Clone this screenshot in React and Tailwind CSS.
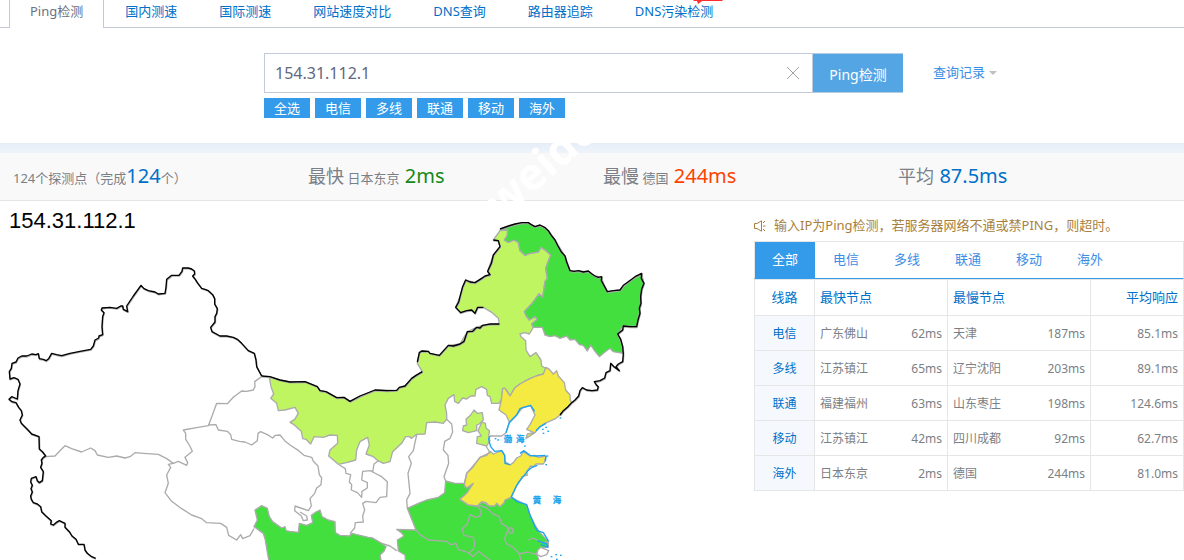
import { useState } from 'react'

const TABS = ['Ping检测', '国内测速', '国际测速', '网站速度对比', 'DNS查询', '路由器追踪', 'DNS污染检测']
const CHIPS = ['全选', '电信', '多线', '联通', '移动', '海外']
const LINES = ['全部', '电信', '多线', '联通', '移动', '海外']

const ROWS = [
  { line: '电信', fast: '广东佛山', fastMs: '62ms', slow: '天津', slowMs: '187ms', avg: '85.1ms' },
  { line: '多线', fast: '江苏镇江', fastMs: '65ms', slow: '辽宁沈阳', slowMs: '203ms', avg: '89.1ms' },
  { line: '联通', fast: '福建福州', fastMs: '63ms', slow: '山东枣庄', slowMs: '198ms', avg: '124.6ms' },
  { line: '移动', fast: '江苏镇江', fastMs: '42ms', slow: '四川成都', slowMs: '92ms', avg: '62.7ms' },
  { line: '海外', fast: '日本东京', fastMs: '2ms', slow: '德国', slowMs: '244ms', avg: '81.0ms' },
]

// Map geometry, three units per pixel
const BORDER_WEST =
  '287,1675 275,1670 262,1660 255,1650 252,1633 235,1633 228,1618 216,1608 208,1595 195,1582 195,1570 178,1562 168,1568 160,1575 152,1572 154,1562 138,1548 125,1535 122,1520 112,1512 100,1508 94,1498 92,1488 97,1476 93,1466 97,1456 92,1446 94,1435 108,1430 112,1442 118,1448 127,1442 130,1415 122,1402 126,1390 124,1380 130,1372 137,1368 128,1356 118,1347 117,1310 95,1302 84,1290 72,1278 64,1270 60,1260 67,1245 64,1232 56,1222 48,1208 36,1205 27,1198 35,1190 52,1197 54,1172 60,1152 54,1138 42,1133 30,1137 28,1115 34,1105 36,1090 48,1086 54,1074 65,1068 80,1068 95,1062 108,1064 115,1061 118,1076 130,1078 138,1082 146,1076 155,1060 170,1064 185,1067 210,1060 240,1054 272,1048 280,1038 285,1020 296,1014 297,1008 308,1004 306,980 308,950 312,938 304,930 306,924 330,922 350,925 362,918 368,918 370,928 383,935 380,918 400,888 423,856 432,866 445,872 465,876 475,882 495,880 498,862 500,838 515,826 537,826 546,814 548,804 565,804 575,807 583,813 584,822 578,828 586,838 592,848 605,865 615,868 625,872 638,884 644,896 644,912 652,926 650,940 645,950 645,966 632,982 636,995 660,1008 680,1008 700,1012 712,1018 725,1030 745,1052 763,1060 768,1080 770,1100 785,1128'
const BORDER_NORTH =
  '785,1128 810,1130 840,1140 870,1146 915,1145 952,1160 960,1172 978,1175 1010,1193 1032,1192 1050,1204 1080,1188 1125,1170 1160,1172 1190,1171 1198,1162 1215,1158 1235,1135 1248,1126 1267,1115'
const BORDER_NOTCH =
  '1252,1086 1258,1058 1265,1053 1285,1054 1290,1060 1318,1066 1345,1036 1360,1038 1380,1032 1392,1024 1402,995 1418,994 1430,982 1440,984 1448,976 1470,972 1498,972'
const BORDER_NE_WEST =
  '1450,922 1433,922 1425,940 1415,930 1400,932 1382,938 1367,922 1376,906 1380,890 1388,860 1397,840 1410,846 1425,848 1445,835 1455,828 1470,824 1463,814 1474,790 1480,765 1488,755 1500,740 1495,722 1480,720'
const BORDER_EAST =
  '1500,687 1525,678 1545,672 1565,668 1585,668 1594,674 1605,680 1620,675 1634,682 1645,692 1654,706 1665,720 1674,738 1684,756 1695,768 1700,786 1710,812 1722,814 1735,812 1750,816 1765,813 1776,822 1785,828 1795,832 1805,830 1804,842 1812,856 1822,875 1840,872 1860,870 1870,856 1885,845 1905,830 1925,820 1924,835 1932,850 1925,868 1922,890 1923,910 1918,925 1920,940 1914,960 1910,980 1890,980 1870,978 1868,990 1853,1002 1862,1018 1868,1040 1870,1062 1868,1085 1855,1092 1848,1100 1858,1112 1842,1100 1832,1090 1830,1112 1818,1118 1814,1134 1800,1142 1783,1145 1790,1156 1795,1160 1792,1170 1776,1172 1760,1170 1747,1163 1740,1172 1736,1188 1725,1200 1715,1208 1704,1220 1690,1232 1680,1245'

const INNER_MONGOLIA =
  '808,1132 840,1140 870,1146 915,1145 952,1160 960,1172 978,1175 1010,1193 1032,1192 1050,1204 1080,1188 1125,1170 1190,1171 1198,1162 1215,1158 1235,1135 1267,1115 1252,1090 1258,1058 1265,1053 1285,1054 1290,1060 1318,1066 1345,1036 1380,1032 1402,995 1430,982 1448,976 1498,972 1495,955 1475,937 1450,922 1433,922 1425,940 1415,930 1382,938 1367,922 1380,890 1388,860 1397,840 1425,848 1445,835 1470,824 1463,814 1480,765 1500,740 1495,722 1480,720 1500,692 1523,690 1522,706 1513,720 1525,727 1542,720 1555,727 1560,752 1575,766 1590,760 1615,756 1623,742 1638,752 1652,765 1637,805 1642,835 1635,845 1628,892 1617,882 1598,908 1573,935 1580,950 1588,960 1605,950 1612,958 1595,972 1600,982 1588,1002 1574,998 1560,1002 1563,1010 1577,1022 1578,1050 1590,1070 1608,1058 1623,1080 1625,1098 1638,1105 1630,1122 1608,1128 1585,1138 1560,1152 1544,1164 1530,1188 1522,1175 1515,1165 1508,1165 1504,1200 1497,1210 1475,1210 1470,1190 1462,1186 1460,1168 1445,1160 1428,1168 1425,1188 1412,1188 1400,1197 1388,1194 1375,1210 1364,1204 1362,1184 1345,1195 1335,1215 1340,1240 1340,1258 1330,1270 1306,1266 1280,1268 1275,1302 1250,1303 1235,1315 1228,1310 1217,1310 1205,1330 1178,1355 1170,1385 1150,1390 1134,1382 1120,1370 1098,1362 1108,1335 1103,1312 1080,1325 1070,1350 1067,1380 1040,1388 1015,1393 986,1368 990,1350 1013,1330 1012,1306 990,1305 970,1312 942,1310 932,1332 918,1318 908,1316 904,1294 882,1274 870,1267 884,1258 895,1240 885,1222 855,1230 835,1232 830,1210 812,1195 821,1182 813,1160'
const HEILONGJIANG =
  '1500,690 1525,680 1565,670 1585,670 1605,680 1620,677 1645,692 1665,720 1695,768 1710,812 1765,815 1785,828 1805,832 1812,856 1822,875 1860,870 1885,845 1925,822 1932,850 1925,868 1922,920 1910,980 1870,978 1853,1002 1866,1035 1868,1060 1840,1055 1830,1045 1812,1058 1798,1070 1782,1050 1772,1035 1762,1053 1750,1036 1738,1034 1725,1018 1710,1020 1700,1008 1680,1015 1665,1007 1650,1010 1635,1005 1627,982 1600,982 1595,972 1612,958 1605,950 1588,960 1580,950 1573,935 1598,908 1617,882 1628,892 1635,845 1642,835 1637,805 1652,765 1638,752 1623,742 1615,756 1590,760 1575,766 1560,752 1555,727 1542,720 1525,727 1513,720 1522,706 1523,690'
const LIAONING =
  '1638,1102 1648,1108 1660,1122 1670,1112 1675,1128 1693,1148 1697,1170 1710,1185 1711,1200 1715,1208 1680,1245 1668,1255 1635,1270 1616,1284 1605,1298 1578,1315 1582,1302 1602,1298 1580,1288 1590,1274 1605,1245 1592,1217 1568,1222 1550,1245 1528,1266 1518,1245 1497,1230 1504,1200 1508,1165 1515,1165 1530,1188 1544,1164 1560,1152 1585,1138 1608,1128 1630,1122'
const BEIJING =
  '1422,1230 1432,1240 1447,1238 1450,1260 1438,1272 1430,1275 1430,1292 1405,1298 1388,1292 1390,1278 1400,1275 1398,1258 1412,1245'
const TIANJIN = '1446,1266 1456,1270 1458,1284 1468,1292 1466,1312 1470,1322 1460,1338 1430,1330 1432,1310 1444,1308 1434,1292'
const SHANDONG =
  '1440,1372 1460,1366 1470,1354 1480,1362 1505,1352 1514,1366 1515,1385 1530,1395 1540,1388 1550,1374 1562,1368 1570,1355 1590,1368 1605,1366 1615,1372 1638,1368 1634,1386 1630,1392 1608,1392 1600,1400 1592,1398 1580,1415 1582,1425 1566,1430 1560,1442 1555,1446 1545,1468 1533,1492 1515,1500 1512,1508 1500,1520 1490,1510 1484,1518 1468,1518 1458,1508 1445,1505 1432,1518 1405,1515 1380,1498 1400,1480 1420,1450 1400,1464 1393,1455 1400,1420 1420,1400 1430,1385'
const EAST_GREEN =
  '1337,1443 1365,1450 1393,1450 1396,1462 1420,1450 1400,1480 1380,1498 1405,1515 1432,1518 1445,1505 1468,1518 1490,1510 1500,1520 1515,1500 1533,1492 1580,1515 1590,1545 1605,1575 1615,1592 1645,1625 1645,1640 1615,1648 1610,1662 1620,1690 1217,1690 1215,1665 1195,1653 1192,1620 1212,1608 1204,1598 1190,1588 1248,1590 1236,1560 1222,1525 1260,1508 1280,1500 1315,1492 1334,1478'
const SICHUAN =
  '808,1690 800,1645 796,1620 790,1600 762,1580 772,1560 765,1530 785,1517 802,1525 808,1550 818,1565 845,1584 855,1580 858,1592 870,1594 895,1597 898,1570 920,1576 938,1568 934,1546 948,1536 960,1530 966,1550 985,1560 1005,1565 1006,1598 1020,1606 1048,1608 1055,1600 1105,1612 1118,1614 1145,1630 1158,1640 1152,1654 1140,1665 1145,1690'

const PROVINCE_LINES = [
  '137,1370 165,1368 182,1350 195,1337 215,1346 245,1356 272,1344 285,1352 292,1365 325,1372 350,1368 375,1374 390,1370 405,1358 430,1360 475,1363 500,1376 520,1390 535,1384 560,1396 563,1388 555,1372 577,1354 568,1335 557,1318 557,1300 550,1290 590,1283 625,1277 637,1246 650,1210 682,1211 700,1192 725,1173 740,1174 760,1170 765,1160 764,1145 785,1130',
  '625,1275 648,1274 655,1290 682,1294 692,1304 695,1318 718,1324 735,1326 755,1335 772,1322 774,1300 782,1295 802,1304 818,1314 826,1306 840,1305 854,1322 870,1335 896,1352 912,1366 935,1372 940,1384 954,1398 958,1424 965,1434 963,1454 950,1464 944,1480 930,1496 934,1518 925,1532 902,1524 885,1518 884,1532 904,1548 910,1562 922,1560 920,1548 900,1536',
  '520,1390 505,1393 512,1402 500,1425 505,1450 495,1478 515,1504 545,1526 575,1545 605,1556 620,1568 662,1570 680,1582 686,1606 710,1620 722,1604 728,1616 750,1607 762,1586',
  '1018,1395 1036,1406 1038,1420 1052,1424 1048,1446 1055,1454 1054,1470 1072,1478 1085,1492 1086,1474 1102,1464 1102,1448 1085,1440 1088,1414 1112,1412 1118,1416 1122,1392 1135,1382',
  '1118,1416 1145,1430 1162,1445 1160,1490 1140,1492 1128,1508 1098,1504 1088,1510 1094,1530 1088,1548 1090,1566 1066,1568 1064,1584 1050,1600',
  '1250,1305 1244,1332 1240,1352 1226,1370 1234,1390 1224,1420 1230,1480 1220,1500 1222,1525',
  '1340,1258 1355,1272 1358,1296 1350,1315 1334,1324 1330,1350 1344,1366 1346,1390 1332,1430 1337,1443',
  '1393,1450 1400,1420 1430,1385 1440,1372 1470,1358 1458,1338',
  '1470,1308 1505,1308 1518,1298 1528,1266',
  '1432,1518 1444,1534 1440,1548 1428,1552 1410,1544 1402,1572 1386,1586 1392,1606 1420,1612 1424,1632 1420,1648 1406,1660 1420,1670 1435,1654 1470,1680',
  '1435,1515 1460,1524 1476,1540 1498,1550 1504,1570 1520,1580 1530,1600 1540,1598 1536,1584 1526,1584 1514,1615 1518,1630 1542,1644 1558,1662 1584,1656 1600,1662 1612,1660',
  '1248,1590 1260,1604 1285,1620 1340,1624 1352,1634 1368,1630 1374,1648 1406,1658',
  '1558,1662 1562,1680',
  '1145,1630 1170,1638 1190,1652',
  '1585,1620 1600,1614 1625,1628 1642,1626',
]

const COAST = [
  '1518,1298 1528,1268 1550,1245 1560,1226 1592,1216 1604,1234',
  '1638,1270 1620,1280 1608,1292',
  '1470,1308 1466,1318 1472,1340 1484,1354 1505,1352 1514,1366 1515,1390 1530,1394',
  '1560,1360 1572,1352 1590,1366 1608,1368 1636,1366',
  '1638,1368 1636,1384',
  '1612,1396 1596,1402 1584,1412 1560,1442 1548,1460 1534,1490 1550,1504 1580,1514 1590,1545 1605,1580 1612,1592 1630,1598 1646,1624',
  '1612,1622 1640,1632 1644,1642 1622,1634',
]

const ISLANDS = [
  [1626, 1286], [1636, 1280], [1642, 1292], [1628, 1298], [1679, 1252], [1572, 1336], [1652, 1668],
  [1666, 1662], [1680, 1664], [1668, 1676], [1484, 1314], [1492, 1318], [1640, 1366], [1636, 1392],
]

const SEA_LABELS = [
  { char: '渤', x: 1511, y: 1327 },
  { char: '海', x: 1548, y: 1325 },
  { char: '黄', x: 1598, y: 1509 },
  { char: '海', x: 1658, y: 1509 },
]

function ChinaMap() {
  return (
    <svg viewBox="0 603 2262 1077" className="block w-full" role="img" aria-label="节点延迟地图">
      <g stroke="#ababab" strokeWidth="4" strokeLinejoin="round">
        <polygon points={INNER_MONGOLIA} fill="#bff561" />
        <polygon points={HEILONGJIANG} fill="#42df3f" />
        <polygon points={EAST_GREEN} fill="#42df3f" />
        <polygon points={SICHUAN} fill="#42df3f" />
        <polygon points={LIAONING} fill="#f5ea41" />
        <polygon points={SHANDONG} fill="#f5ea41" />
        <polygon points={BEIJING} fill="#bff561" />
        <polygon points={TIANJIN} fill="#bff561" />
        <polygon points="1614,1650 1622,1642 1646,1652 1640,1664 1622,1670 1610,1662" fill="#fff" />
      </g>
      <g fill="none" stroke="#ababab" strokeWidth="4" strokeLinejoin="round">
        {PROVINCE_LINES.map((points) => <polyline key={points} points={points} />)}
      </g>
      {/* National border: grey shadow first, black line over it */}
      {[BORDER_WEST, BORDER_NORTH, BORDER_NOTCH, BORDER_NE_WEST, BORDER_EAST].map((points) => (
        <g key={points} fill="none" strokeLinejoin="round">
          <polyline points={points} stroke="#ababab" strokeWidth="5" transform="translate(1 2)" />
          <polyline points={points} stroke="#000" strokeWidth="4" />
        </g>
      ))}
      <g fill="none" stroke="#1aa3ee" strokeWidth="4" strokeLinejoin="round">
        {COAST.map((points) => <polyline key={points} points={points} />)}
      </g>
      {ISLANDS.map(([x, y]) => <rect key={`${x}-${y}`} x={x} y={y} width="5" height="4" fill="#1aa3ee" />)}
      {SEA_LABELS.map((s) => (
        <text key={`${s.char}-${s.x}`} x={s.x} y={s.y} fill="#1aa3ee" stroke="#1aa3ee" fontSize="25" fontWeight="700" fontFamily="'Noto Sans CJK SC', sans-serif">
          {s.char}
        </text>
      ))}
    </svg>
  )
}

function TopTabs() {
  return (
    <nav className="flex h-7 text-[13px]">
      <div className="w-[9px] border-b border-[#c3cad6]" />
      {TABS.map((tab, i) => (
        <a
          key={tab}
          href="#"
          className={
            i === 0
              ? 'border-x border-[#c3cad6] px-5 leading-[22px] text-[#6b7280]'
              : 'relative border-b border-[#c3cad6] px-[21px] leading-[22px] text-[#0070c9]'
          }
        >
          {tab}
          {i === 6 && (
            <svg viewBox="0 0 30 4" className="absolute top-0 right-[11px] h-1 w-[30px]" aria-hidden="true">
              <path d="M0 0H30L29 1H9L5 4L4 1H1Z" fill="#ff2d2d" />
            </svg>
          )}
        </a>
      ))}
      <div className="flex-1 border-b border-[#c3cad6]" />
    </nav>
  )
}

function SearchBar() {
  const [host, setHost] = useState('154.31.112.1')

  return (
    <section className="pt-[25px] pr-[187px] pb-[25px] pl-66">
      <form className="flex h-10" onSubmit={(e) => e.preventDefault()}>
        <div className="flex flex-1 items-center border border-[#c3cadb] pr-3">
          <input
            type="text"
            aria-label="检测地址"
            value={host}
            onChange={(e) => setHost(e.target.value)}
            className="min-w-0 flex-1 px-2.5 text-base text-[#5f6880] outline-none"
          />
          <button type="button" aria-label="清空" onClick={() => setHost('')}>
            <svg viewBox="0 0 14 14" className="block size-3.5">
              <path d="M1 1L13 13M13 1L1 13" stroke="#a3a3a3" strokeWidth="1" />
            </svg>
          </button>
        </div>
        <button type="submit" className="w-[90px] border-y border-[#b4cbe6] bg-[#54a5e4] pt-1 text-sm text-white">
          Ping检测
        </button>
        <a href="#" className="ml-[30px] flex items-center gap-1 text-[13px] text-[#3a8ee6]">
          查询记录
          <svg viewBox="0 0 8 4" className="h-1 w-2" aria-hidden="true">
            <path d="M0 0H8L4 4Z" fill="#c0c0c0" />
          </svg>
        </a>
      </form>
      <div className="mt-[5px] flex gap-[5px]">
        {CHIPS.map((chip) => (
          <button key={chip} type="button" className="h-5 w-[46px] bg-[#339be9] text-[13px] leading-5 text-white">
            {chip}
          </button>
        ))}
      </div>
    </section>
  )
}

function Stats() {
  return (
    <section className="grid h-12 grid-cols-4 items-center border-b border-[#e6e6e6] bg-[#f9f9f9] pr-1 pb-0.5 text-[13px] whitespace-nowrap text-[#7b7f86] *:pl-[13px]">
      <p>
        124个探测点（完成<span className="text-xl text-[#0070c9]">124</span>个）
      </p>
      <p>
        <span className="text-lg">最快</span> 日本东京 <span className="ml-0.5 text-xl text-[#138a1a]">2ms</span>
      </p>
      <p>
        <span className="text-lg">最慢</span> 德国 <span className="ml-0.5 text-xl text-[#ff4200]">244ms</span>
      </p>
      <p>
        <span className="text-lg">平均</span> <span className="ml-0.5 text-xl text-[#0070c9]">87.5ms</span>
      </p>
    </section>
  )
}

function ResultPanel() {
  const [active, setActive] = useState('全部')

  return (
    <section className="w-[430px] shrink-0 pt-[15px]">
      <p className="flex h-[25px] items-center gap-2 pb-[5px] text-[13px] text-[#a87f3d]">
        <svg viewBox="0 0 12 12" className="size-3" fill="none" stroke="#a87f3d" aria-hidden="true">
          <path d="M0.5 3.5H3L7.5 0.8V11.2L3 8.5H0.5ZM9 3L11 1M9 6H11.5M9 9L11 11" />
        </svg>
        输入IP为Ping检测，若服务器网络不通或禁PING，则超时。
      </p>
      <div className="flex h-[38px] border border-b-[#339be9] border-[#e6e6e6] text-[13px]">
        {LINES.map((line) => (
          <button
            key={line}
            type="button"
            onClick={() => setActive(line)}
            className={line === active ? 'mr-px w-[60px] bg-[#339be9] text-white' : 'mr-px w-[60px] text-[#3a8ee6]'}
          >
            {line}
          </button>
        ))}
      </div>
      <table className="w-full table-fixed border-separate border-spacing-0 border-t border-l border-[#e6e6e6] text-xs text-[#7b7f86] [&_td]:border-r [&_td]:border-b [&_td]:border-[#e6e6e6] [&_th]:border-r [&_th]:border-b [&_th]:border-[#e6e6e6]">
        <thead>
          <tr className="h-9 text-left text-[13px] text-[#0070c9] [&>th]:font-normal">
            <th scope="col" className="w-[60px] text-center">线路</th>
            <th scope="col" className="w-[133px] px-[5px]">最快节点</th>
            <th scope="col" className="w-[143px] px-[5px]">最慢节点</th>
            <th scope="col" className="px-[5px] text-right">平均响应</th>
          </tr>
        </thead>
        <tbody>
          {ROWS.map((row) => (
            <tr key={row.line} className="h-[35px] *:pt-0.5">
              <th scope="row" className="bg-[#f5f9fd] text-center font-normal text-[#0070c9]">{row.line}</th>
              <td className="px-[5px]">
                <div className="flex justify-between">
                  <span>{row.fast}</span>
                  <span>{row.fastMs}</span>
                </div>
              </td>
              <td className="px-[5px]">
                <div className="flex justify-between">
                  <span>{row.slow}</span>
                  <span>{row.slowMs}</span>
                </div>
              </td>
              <td className="px-[5px] text-right">{row.avg}</td>
            </tr>
          ))}
        </tbody>
      </table>
    </section>
  )
}

export default function App() {
  return (
    <div className="relative overflow-hidden bg-white font-['Noto_Sans','Noto_Sans_CJK_SC',sans-serif]">
      <TopTabs />
      <SearchBar />
      <div className="h-2.5 bg-linear-to-b from-[#e6edf7] to-[#eff4fa]" />
      <Stats />
      <main className="flex items-start">
        <div className="relative min-w-0 flex-1">
          <ChinaMap />
          <h1 className="absolute top-2 left-[9px] font-['Liberation_Sans',sans-serif] text-[22px] leading-6 text-black">
            154.31.112.1
          </h1>
        </div>
        <ResultPanel />
      </main>
      {/* Diagonal site watermark */}
      <span
        aria-hidden="true"
        className="pointer-events-none absolute top-[180px] left-[505px] origin-bottom-left -rotate-41 text-[44px] leading-none font-bold text-white"
      >
        weido
      </span>
    </div>
  )
}
